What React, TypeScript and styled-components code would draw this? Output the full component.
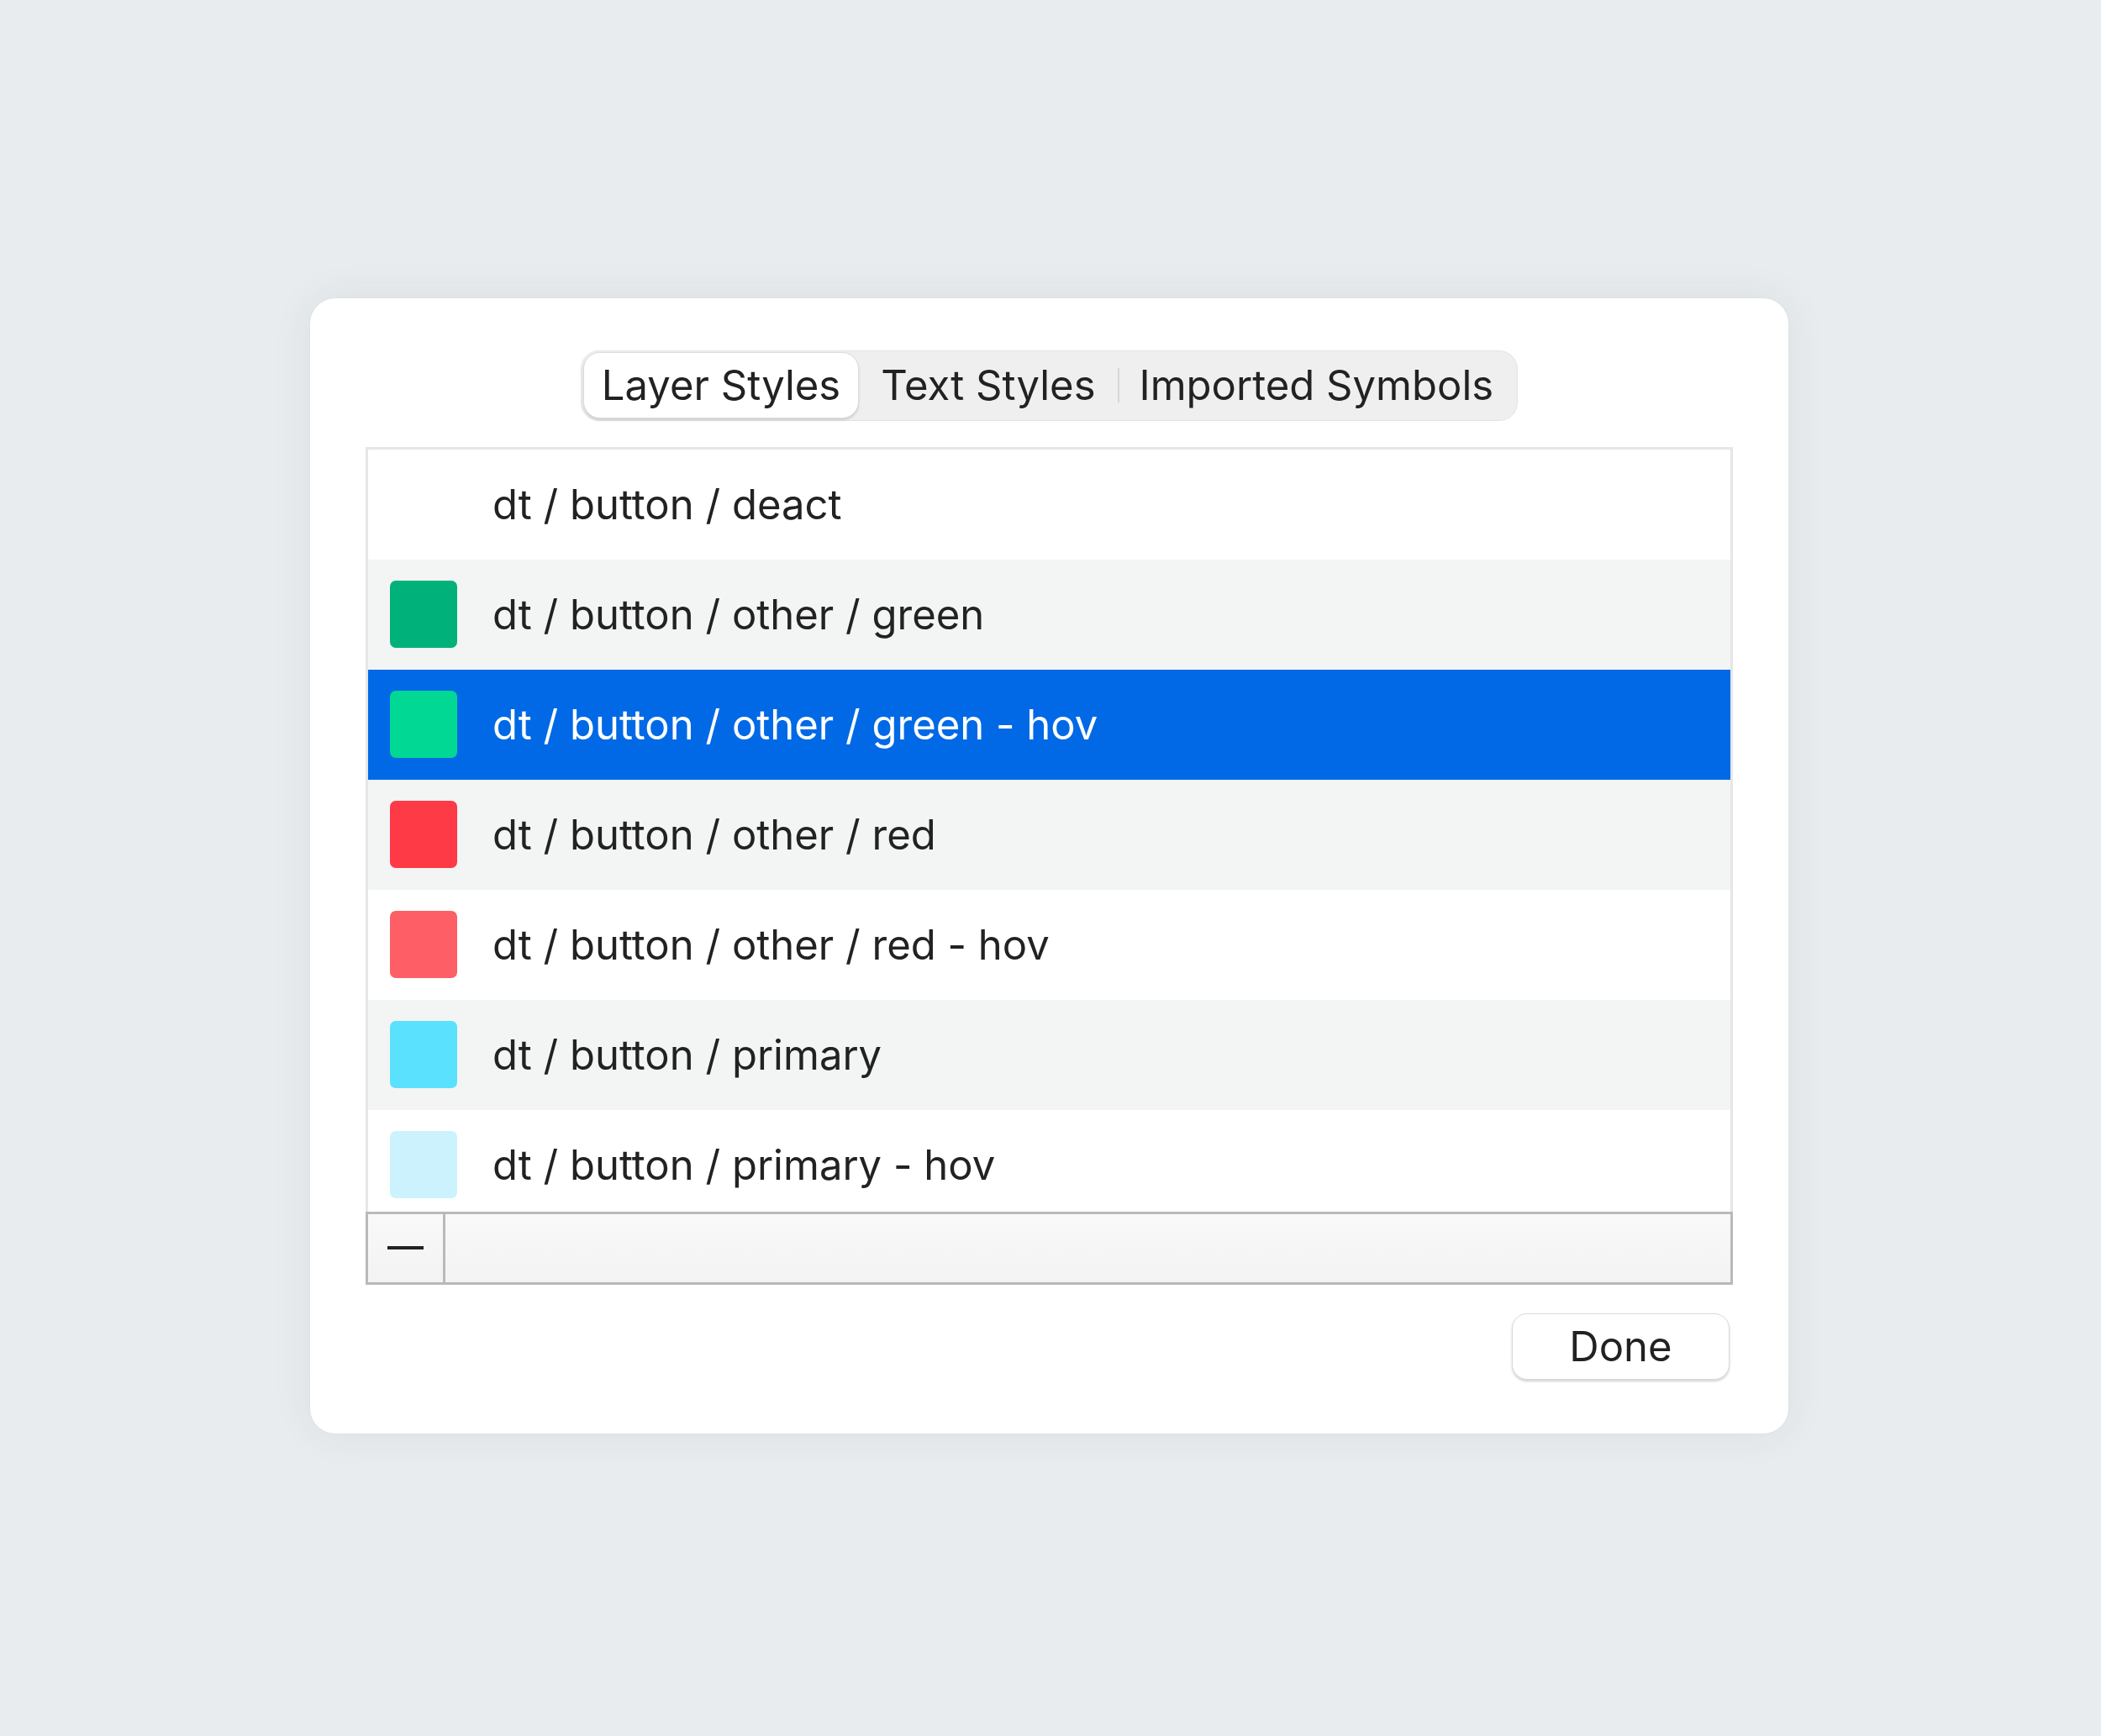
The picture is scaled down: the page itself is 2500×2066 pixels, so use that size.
import React from "react";
import styled, { createGlobalStyle } from "styled-components";

const GlobalStyle = createGlobalStyle`
	html, body {
		margin: 0;
		padding: 0;
		background: #e8ecee;
		font-family: "Inter", "Liberation Sans", sans-serif;
	}
`;

const Page = styled.div`
	min-height: 2066px;
	display: flex;
	align-items: center;
	justify-content: center;
`;

const Dialog = styled.div`
	width: 1759px;
	box-sizing: border-box;
	margin: 0 3px 6px 0;
	padding: 62px 66px 64px;
	background: #fff;
	border-radius: 30px;
	box-shadow: 0 0 50px rgba(40, 60, 70, 0.07), 0 0 2px rgba(0, 0, 0, 0.06);
	display: flex;
	flex-direction: column;
`;

const TabsRow = styled.div`
	display: flex;
	justify-content: center;
	margin-bottom: 31px;
`;

const Segmented = styled.div`
	display: inline-flex;
	align-items: center;
	height: 84px;
	box-sizing: border-box;
	padding: 2px;
	background: #efefef;
	border: 1px solid #e4e4e4;
	border-radius: 22px;
`;

const Tab = styled.button<{ $active?: boolean; $divider?: boolean }>`
	position: relative;
	height: 79px;
	padding: 0 ${p => (p.$active ? "21px" : "25px")};
	border: ${p => (p.$active ? "1px solid #dcdcdc" : "1px solid transparent")};
	border-radius: 20px;
	background: ${p => (p.$active ? "#fff" : "transparent")};
	box-shadow: ${p => (p.$active ? "0 2px 3px rgba(0, 0, 0, 0.14)" : "none")};
	font-family: inherit;
	font-size: 49px;
	color: #222;
	line-height: 1;

	&::before {
		content: "";
		display: ${p => (p.$divider ? "block" : "none")};
		position: absolute;
		left: -1px;
		top: 18px;
		bottom: 18px;
		width: 2px;
		background: #d6d6d6;
	}
`;

const ListBox = styled.div`
	height: 907px;
	overflow: hidden;
	border: 3px solid #e6e6e6;
	border-bottom: 0;
`;

const Row = styled.div<{ $tone: "white" | "gray" | "selected" }>`
	height: 131px;
	display: flex;
	align-items: center;
	padding-left: 26px;
	background: ${p =>
		p.$tone === "selected" ? "#0169e6" : p.$tone === "gray" ? "#f3f4f4" : "#fff"};
	color: ${p => (p.$tone === "selected" ? "#fff" : "#222")};
	font-size: 49px;
`;

const Swatch = styled.div<{ $color?: string }>`
	width: 80px;
	height: 80px;
	border-radius: 7px;
	margin-right: 42px;
	flex-shrink: 0;
	background: ${p => p.$color || "transparent"};
`;

const Footer = styled.div`
	height: 87px;
	box-sizing: border-box;
	display: flex;
	border: 3px solid #b9b9b9;
	background: linear-gradient(#f9f9f9, #f3f3f3);
`;

const MinusButton = styled.div`
	width: 89px;
	border-right: 3px solid #b9b9b9;
	display: flex;
	align-items: center;
	justify-content: center;

	span {
		width: 43px;
		height: 4px;
		background: #222;
	}
`;

const Actions = styled.div`
	display: flex;
	justify-content: flex-end;
	margin-top: 34px;
	padding-right: 4px;
`;

const DoneButton = styled.button`
	width: 259px;
	height: 79px;
	border-radius: 18px;
	border: 1px solid #dadada;
	background: #fff;
	box-shadow: 0 2px 3px rgba(0, 0, 0, 0.18);
	font-family: inherit;
	font-size: 49px;
	color: #222;
`;

const styles = [
	{ name: "dt / button / deact" },
	{ name: "dt / button / other / green", color: "#00b27a" },
	{ name: "dt / button / other / green - hov", color: "#00d893", selected: true },
	{ name: "dt / button / other / red", color: "#fd3a46" },
	{ name: "dt / button / other / red - hov", color: "#fe5e66" },
	{ name: "dt / button / primary", color: "#5ae1fe" },
	{ name: "dt / button / primary - hov", color: "#ccf3fd" },
];

const App = () => {
	return (
		<Page>
			<GlobalStyle />
			<Dialog>
				<TabsRow>
					<Segmented>
						<Tab $active>Layer Styles</Tab>
						<Tab>Text Styles</Tab>
						<Tab $divider>Imported Symbols</Tab>
					</Segmented>
				</TabsRow>
				<ListBox>
					{styles.map((s, i) => (
						<Row key={s.name} $tone={s.selected ? "selected" : i % 2 === 1 ? "gray" : "white"}>
							<Swatch $color={s.color} />
							{s.name}
						</Row>
					))}
				</ListBox>
				<Footer>
					<MinusButton>
						<span />
					</MinusButton>
				</Footer>
				<Actions>
					<DoneButton>Done</DoneButton>
				</Actions>
			</Dialog>
		</Page>
	);
};

export default App;
